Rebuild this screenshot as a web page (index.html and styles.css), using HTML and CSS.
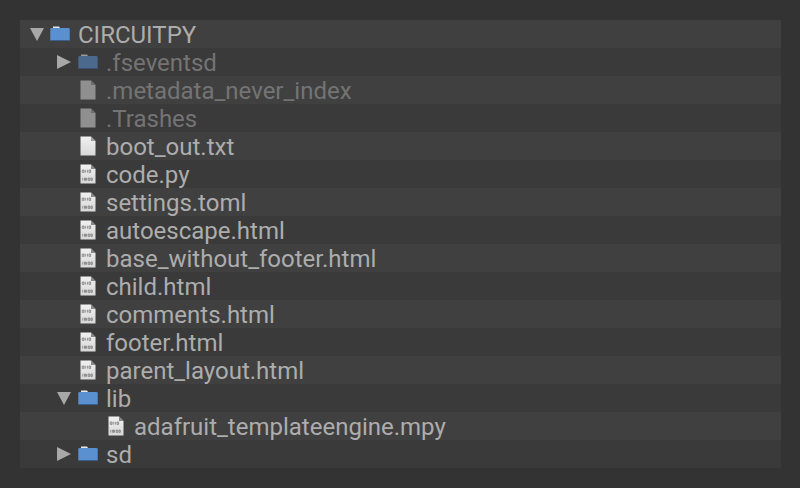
FILE: index.html
```html
<!DOCTYPE html>
<html lang="en">
<head>
<meta charset="utf-8">
<title>CIRCUITPY</title>
<link rel="stylesheet" href="styles.css">
</head>
<body>
<svg class="defs" width="0" height="0" aria-hidden="true">
  <defs>
    <linearGradient id="paper" x1="0" y1="0" x2="0" y2="1">
      <stop offset="0" stop-color="#f0f0f0"/>
      <stop offset="1" stop-color="#d8d8d8"/>
    </linearGradient>
  </defs>
  <symbol id="folder" viewBox="0 0 20 16">
    <path d="M3 0.5h6l1 1.5H3z" fill="#e8e8e8"/>
    <path d="M1.5 2h17a1.2 1.2 0 0 1 1.2 1.2v10.6a1.2 1.2 0 0 1-1.2 1.2h-17a1.2 1.2 0 0 1-1.2-1.2V3.2A1.2 1.2 0 0 1 1.5 2z" fill="#5a90d0"/>
    <path d="M0.5 14h19v0.3a0.8 0.8 0 0 1-0.8 0.7H1.3a0.8 0.8 0 0 1-0.8-0.7z" fill="#3a5f8c"/>
  </symbol>
  <symbol id="doc" viewBox="0 0 16 20">
    <path d="M0.5 0.5H11L15.5 5V19.5H0.5z" fill="#8f8f8f"/>
    <path d="M11 0.5V5H15.5z" fill="#6e6e6e"/>
  </symbol>
  <symbol id="blank" viewBox="0 0 16 20">
    <path d="M0.5 0.5H11L15.5 5V19.5H0.5z" fill="url(#paper)"/>
    <path d="M11 0.5V5H15.5z" fill="#9a9a9a"/>
  </symbol>
  <symbol id="bin" viewBox="0 0 16 20">
    <path d="M0.5 0.5H11L15.5 5V19.5H0.5z" fill="url(#paper)"/>
    <path d="M11 0.5V5H15.5z" fill="#858585"/>
    <path d="M2.3 6h1.6v2.4H2.3zM9 6h1.6v2.4H9zM5.3 5.8v2.8M7.4 5.8v2.8M11.8 5.8v0M2.8 13.8v2.8M6.6 13.8v2.8M4.6 14h1v2.4h-1zM8.2 14h1.6v2.4H8.2zM11 14h1.3v2.4H11z" fill="none" stroke="#6a6a6a" stroke-width="0.7"/>
  </symbol>
</svg>
<main class="tree">
  <div class="row">
    <span class="twisty"><svg class="arrow" viewBox="0 0 14 14"><path d="M0 1h14L7 14z"/></svg></span>
    <span class="icon"><svg class="ic-folder"><use href="#folder"/></svg></span>
    <span class="label">CIRCUITPY</span>
  </div>
  <div class="row l1 dim">
    <span class="twisty"><svg class="arrow" viewBox="0 0 14 14"><path d="M0 0l14 7L0 14z"/></svg></span>
    <span class="icon"><svg class="ic-folder faded"><use href="#folder"/></svg></span>
    <span class="label">.fseventsd</span>
  </div>
  <div class="row l1 dim">
    <span class="twisty"></span>
    <span class="icon"><svg class="ic-doc"><use href="#doc"/></svg></span>
    <span class="label">.metadata_never_index</span>
  </div>
  <div class="row l1 dim">
    <span class="twisty"></span>
    <span class="icon"><svg class="ic-doc"><use href="#doc"/></svg></span>
    <span class="label">.Trashes</span>
  </div>
  <div class="row l1">
    <span class="twisty"></span>
    <span class="icon"><svg class="ic-doc"><use href="#blank"/></svg></span>
    <span class="label">boot_out.txt</span>
  </div>
  <div class="row l1"><span class="twisty"></span><span class="icon"><svg class="ic-doc"><use href="#bin"/></svg></span><span class="label">code.py</span></div>
  <div class="row l1"><span class="twisty"></span><span class="icon"><svg class="ic-doc"><use href="#bin"/></svg></span><span class="label">settings.toml</span></div>
  <div class="row l1"><span class="twisty"></span><span class="icon"><svg class="ic-doc"><use href="#bin"/></svg></span><span class="label">autoescape.html</span></div>
  <div class="row l1"><span class="twisty"></span><span class="icon"><svg class="ic-doc"><use href="#bin"/></svg></span><span class="label">base_without_footer.html</span></div>
  <div class="row l1"><span class="twisty"></span><span class="icon"><svg class="ic-doc"><use href="#bin"/></svg></span><span class="label">child.html</span></div>
  <div class="row l1"><span class="twisty"></span><span class="icon"><svg class="ic-doc"><use href="#bin"/></svg></span><span class="label">comments.html</span></div>
  <div class="row l1"><span class="twisty"></span><span class="icon"><svg class="ic-doc"><use href="#bin"/></svg></span><span class="label">footer.html</span></div>
  <div class="row l1"><span class="twisty"></span><span class="icon"><svg class="ic-doc"><use href="#bin"/></svg></span><span class="label">parent_layout.html</span></div>
  <div class="row l1">
    <span class="twisty"><svg class="arrow" viewBox="0 0 14 14"><path d="M0 1h14L7 14z"/></svg></span>
    <span class="icon"><svg class="ic-folder"><use href="#folder"/></svg></span>
    <span class="label">lib</span>
  </div>
  <div class="row l2"><span class="twisty"></span><span class="icon"><svg class="ic-doc"><use href="#bin"/></svg></span><span class="label">adafruit_templateengine.mpy</span></div>
  <div class="row l1">
    <span class="twisty"><svg class="arrow" viewBox="0 0 14 14"><path d="M0 0l14 7L0 14z"/></svg></span>
    <span class="icon"><svg class="ic-folder"><use href="#folder"/></svg></span>
    <span class="label">sd</span>
  </div>
</main>
</body>
</html>
```
FILE: styles.css
```css
html, body {
  margin: 0;
  height: 100%;
}
body {
  background: #333333;
  padding: 20px 19px 0 20px;
  box-sizing: border-box;
  font-family: Roboto, "Liberation Sans", sans-serif;
  overflow: hidden;
}
.defs {
  position: absolute;
}
.tree {
  display: flex;
  flex-direction: column;
}
.row {
  display: flex;
  align-items: center;
  height: 28px;
  padding-left: 8px;
  color: #adadad;
  font-size: 24px;
  background: #3a3a3a;
}
.row:nth-child(odd) {
  background: #404040;
}
.row.l1 {
  padding-left: 36px;
}
.row.l2 {
  padding-left: 64px;
}
.row.dim {
  color: #747474;
}
.label {
  padding-top: 2px;
}
.twisty {
  display: flex;
  width: 22px;
  flex: none;
}
.arrow {
  width: 14px;
  height: 14px;
  margin-left: 2px;
  fill: #a8a8a8;
}
.l1 .arrow {
  margin-left: 1px;
}
.icon {
  display: flex;
  width: 28px;
  flex: none;
}
.ic-folder {
  width: 20px;
  height: 16px;
}
.ic-doc {
  width: 16px;
  height: 20px;
  margin-left: 2px;
}
.faded {
  opacity: 0.55;
}
```
